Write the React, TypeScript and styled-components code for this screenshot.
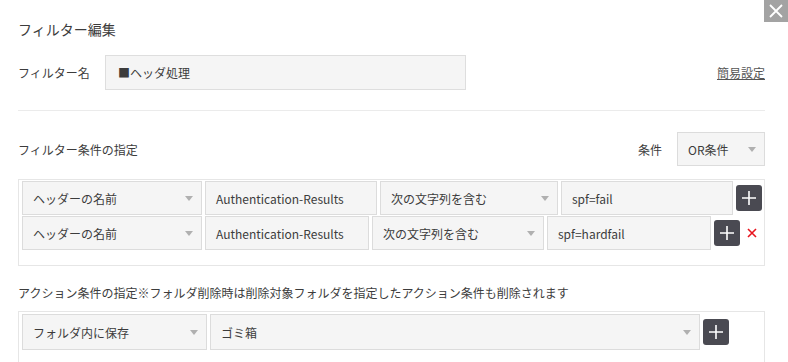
import React from 'react'
import styled, { createGlobalStyle } from 'styled-components'

const GlobalStyle = createGlobalStyle`
  body {
    margin: 0;
    background: #fff;
    font-family: 'Noto Sans CJK JP', 'Noto Sans', sans-serif;
    color: #3c3c3c;
  }
`
const Page = styled.div`
  position: relative;
  width: 788px;
  height: 362px;
  overflow: hidden;
  padding: 0 23px 0 18px;
  box-sizing: border-box;
`
const CloseButton = styled.div`
  position: absolute;
  top: 0;
  right: 0;
  width: 24px;
  height: 22px;
  background: #a3a3a3;
  display: flex;
  align-items: center;
  justify-content: center;
`
const Title = styled.div`
  padding-top: 19px;
  font-size: 14px;
  line-height: 20px;
`
const NameRow = styled.div`
  display: flex;
  align-items: center;
  margin-top: 16px;
  height: 35px;
`
const Label = styled.div`
  font-size: 12px;
  width: 87px;
`
const NameInput = styled.div`
  width: 361px;
  height: 35px;
  box-sizing: border-box;
  border: 1px solid #dedede;
  background: #f5f5f5;
  font-size: 12px;
  padding-left: 12px;
  display: flex;
  align-items: center;
`
const Link = styled.a`
  margin-left: auto;
  font-size: 12px;
  color: #555;
  text-decoration: underline;
`
const Divider = styled.div`
  margin-top: 20px;
  height: 1px;
  background: #ebebeb;
`
const SectionHead = styled.div`
  display: flex;
  align-items: center;
  margin-top: 21px;
  height: 34px;
  font-size: 12px;
`
const SectionTitle = styled.div<{ $top?: number }>`
  font-size: 12px;
  line-height: 20px;
  margin-top: ${(p) => p.$top ?? 0}px;
`
const CondLabel = styled.div`
  margin-left: auto;
  margin-right: 15px;
`
const Box = styled.div<{ $top: number; $padTop: number }>`
  margin-top: ${(p) => p.$top}px;
  border: 1px solid #e6e6e6;
  padding: ${(p) => p.$padTop}px 3px 15px 3px;
  display: flex;
  flex-direction: column;
  gap: 1px;
`
const Row = styled.div<{ $height: number }>`
  display: flex;
  align-items: center;
  gap: 3px;
  height: ${(p) => p.$height}px;
`
const Field = styled.div<{ $width: number }>`
  position: relative;
  flex: none;
  width: ${(p) => p.$width}px;
  height: 100%;
  box-sizing: border-box;
  border: 1px solid #dcdcdc;
  background: #f5f5f5;
  font-size: 12px;
  padding: 0 20px 0 10px;
  display: flex;
  align-items: center;
  white-space: nowrap;
`
const Arrow = styled.span`
  position: absolute;
  right: 8px;
  top: 50%;
  margin-top: -2px;
  width: 0;
  height: 0;
  border-left: 4px solid transparent;
  border-right: 4px solid transparent;
  border-top: 5px solid #b0b0b0;
`
const PlusButton = styled.div`
  flex: none;
  width: 26px;
  height: 26px;
  border-radius: 3px;
  background: #4a4a52;
  display: flex;
  align-items: center;
  justify-content: center;
`
const Remove = styled.div`
  margin-left: 4px;
  display: flex;
  align-items: center;
`

const Select = ({ width, children }: { width: number; children: React.ReactNode }) => (
  <Field $width={width}>
    {children}
    <Arrow />
  </Field>
)

const Plus = () => (
  <PlusButton>
    <svg width="16" height="16" viewBox="0 0 16 16">
      <path d="M8 1v14M1 8h14" stroke="#fff" strokeWidth="1.6" />
    </svg>
  </PlusButton>
)

interface Condition {
  widths: number[]
  value: string
  removable: boolean
}

const conditions: Condition[] = [
  { widths: [180, 172, 178, 172], value: 'spf=fail', removable: false },
  { widths: [180, 164, 172, 164], value: 'spf=hardfail', removable: true },
]

export default function App() {
  return (
    <Page>
      <GlobalStyle />
      <CloseButton>
        <svg width="16" height="16" viewBox="0 0 16 16">
          <path d="M2 2l12 12M14 2L2 14" stroke="#fff" strokeWidth="1.8" />
        </svg>
      </CloseButton>
      <Title>フィルター編集</Title>
      <NameRow>
        <Label>フィルター名</Label>
        <NameInput>■ヘッダ処理</NameInput>
        <Link>簡易設定</Link>
      </NameRow>
      <Divider />
      <SectionHead>
        <div>フィルター条件の指定</div>
        <CondLabel>条件</CondLabel>
        <Select width={88}>OR条件</Select>
      </SectionHead>
      <Box $top={13} $padTop={1}>
        {conditions.map((c, i) => (
          <Row key={i} $height={34}>
            <Select width={c.widths[0]}>ヘッダーの名前</Select>
            <Field $width={c.widths[1]}>Authentication-Results</Field>
            <Select width={c.widths[2]}>次の文字列を含む</Select>
            <Field $width={c.widths[3]}>{c.value}</Field>
            <Plus />
            {c.removable && (
              <Remove>
                <svg width="10" height="10" viewBox="0 0 10 10">
                  <path d="M1 1l8 8M9 1L1 9" stroke="#e8141e" strokeWidth="1.6" />
                </svg>
              </Remove>
            )}
          </Row>
        ))}
      </Box>
      <SectionTitle $top={17}>
        アクション条件の指定※フォルダ削除時は削除対象フォルダを指定したアクション条件も削除されます
      </SectionTitle>
      <Box $top={8} $padTop={2}>
        <Row $height={36}>
          <Select width={185}>フォルダ内に保存</Select>
          <Select width={490}>ゴミ箱</Select>
          <Plus />
        </Row>
      </Box>
    </Page>
  )
}
